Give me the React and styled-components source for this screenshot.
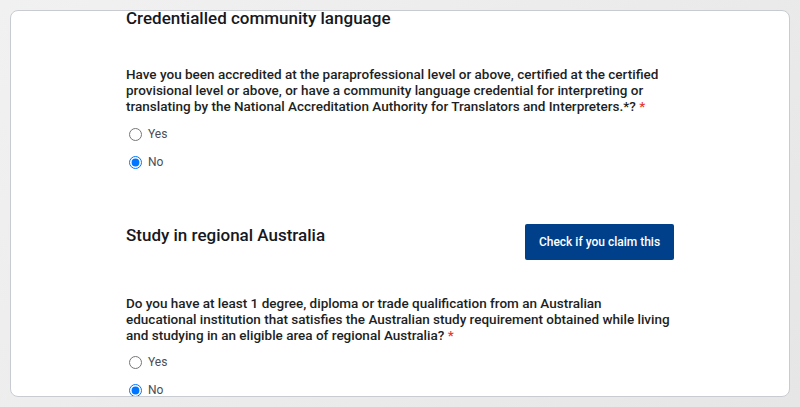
import styled, { createGlobalStyle } from 'styled-components';

const GlobalStyle = createGlobalStyle`
  html, body {
    margin: 0;
    padding: 0;
    height: 100%;
  }
  body {
    background: linear-gradient(135deg, #f1f1f1 0%, #e6e6e6 100%);
    font-family: Roboto, "Liberation Sans", sans-serif;
    overflow: hidden;
  }
`;

const Page = styled.div`
  width: 800px;
  height: 407px;
  padding: 10px;
  box-sizing: border-box;
`;

const Card = styled.div`
  height: 387px;
  box-sizing: border-box;
  background: #fff;
  border: 1px solid #c8ccd2;
  border-radius: 8px;
  overflow: hidden;
`;

const Column = styled.div`
  width: 548px;
  margin: 0 auto;
`;

const Section = styled.section`
  margin-top: ${(p) => p.$top || 0}px;
`;

const HeaderRow = styled.div`
  display: flex;
  justify-content: space-between;
  align-items: flex-start;
`;

const Heading = styled.h2`
  margin: ${(p) => p.$offset || 0}px 0 0;
  font-size: 17px;
  line-height: 20px;
  font-weight: 500;
  color: #16181d;
`;

const ClaimButton = styled.button`
  width: 149px;
  height: 36px;
  border: none;
  border-radius: 2px;
  background: #00408b;
  color: #fff;
  font-family: inherit;
  font-size: 12px;
  font-weight: 500;
  cursor: pointer;
`;

const Question = styled.p`
  margin: ${(p) => p.$top}px -20px ${(p) => p.$bottom || 5}px 0;
  font-size: 13.5px;
  line-height: 16px;
  font-weight: 500;
  color: #1d1f24;
  white-space: nowrap;
`;

const Required = styled.span`
  color: #e53935;
`;

const Option = styled.label`
  display: flex;
  align-items: center;
  height: 28px;
  font-size: 12px;
  color: #4a4d55;
`;

const Radio = styled.input`
  width: 13px;
  height: 13px;
  margin: 0 6px 0 3px;
`;

const RadioGroup = ({ name, value }) => (
  <div>
    <Option>
      <Radio type="radio" name={name} defaultChecked={value === 'yes'} />
      Yes
    </Option>
    <Option>
      <Radio type="radio" name={name} defaultChecked={value === 'no'} />
      No
    </Option>
  </div>
);

export default function App() {
  return (
    <Page>
      <GlobalStyle />
      <Card>
        <Column>
          <Section>
            <Heading $offset={-3}>Credentialled community language</Heading>
            <Question $top={38} $bottom={6}>
              Have you been accredited at the paraprofessional level or above, certified at the certified
              <br />
              provisional level or above, or have a community language credential for interpreting or
              <br />
              translating by the National Accreditation Authority for Translators and Interpreters.*?{' '}
              <Required>*</Required>
            </Question>
            <RadioGroup name="ccl" value="no" />
          </Section>

          <Section $top={48}>
            <HeaderRow>
              <Heading $offset={1}>Study in regional Australia</Heading>
              <ClaimButton>Check if you claim this</ClaimButton>
            </HeaderRow>
            <Question $top={35}>
              Do you have at least 1 degree, diploma or trade qualification from an Australian
              <br />
              educational institution that satisfies the Australian study requirement obtained while living
              <br />
              and studying in an eligible area of regional Australia? <Required>*</Required>
            </Question>
            <RadioGroup name="regional" value="no" />
          </Section>
        </Column>
      </Card>
    </Page>
  );
}
